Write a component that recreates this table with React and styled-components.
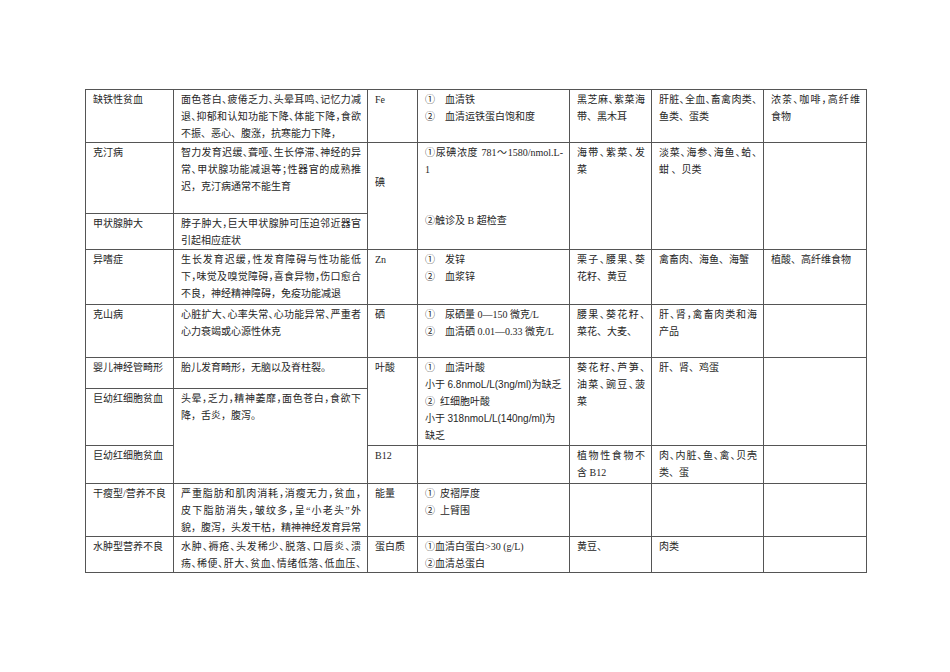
import React from "react";
import styled, { createGlobalStyle, css } from "styled-components";

const GlobalStyle = createGlobalStyle`
  body {
    margin: 0;
    background: #ffffff;
  }
`;

const Page = styled.div`
  padding: 89px 0 40px 85px;
`;

const Table = styled.table`
  border-collapse: collapse;
  table-layout: fixed;
  width: 781px;
  font-family: "Liberation Serif", "Noto Sans CJK SC", serif;
  font-size: 10px;
  color: #262626;
`;

const Row = styled.tr`
  height: ${(p) => p.$h}px;
`;

const Cell = styled.td`
  border: 1px solid #555;
  vertical-align: top;
  padding: ${(p) => p.$pt ?? 1}px 6px 0 7px;
  line-height: 17px;
  overflow: hidden;
`;

const Line = styled.div`
  height: 17px;
  white-space: nowrap;
  ${(p) =>
    p.$j &&
    css`
      text-align: justify;
      text-align-last: justify;
      font-feature-settings: "halt";
    `}
`;

const Sans = styled.span`
  font-family: "Liberation Sans", "Noto Sans CJK SC", sans-serif;
`;

// J() = 满行，两端对齐
const J = (t) => ({ t, j: true });

const widths = [88, 194, 50, 152, 82, 112, 103];

const rows = [
  {
    h: 53,
    cells: [
      { l: ["缺铁性贫血"] },
      {
        l: [
          J("面色苍白、疲倦乏力、头晕耳鸣、记忆力减"),
          J("退、抑郁和认知功能下降、体能下降，食欲"),
          "不振、恶心、腹涨，抗寒能力下降，",
        ],
      },
      { l: ["Fe"] },
      { l: ["①\u3000血清铁", "②\u3000血清运铁蛋白饱和度"] },
      { l: [J("黑芝麻、紫菜海"), "带、黑木耳"] },
      { l: [J("肝脏、全血、畜禽肉类、"), "鱼类、蛋类"] },
      { l: [J("浓茶、咖啡，高纤维"), "食物"] },
    ],
  },
  {
    h: 71,
    cells: [
      { l: ["克汀病"] },
      {
        l: [
          J("智力发育迟缓、聋哑、生长停滞、神经的异"),
          J("常、甲状腺功能减退等；性器官的成熟推"),
          "迟，克汀病通常不能生育",
        ],
      },
      { l: ["碘"], rs: 2, pt: 31 },
      { l: [J("①尿碘浓度 781～1580/nmol.L-"), "1", "", "", "②触诊及 B 超检查"], rs: 2 },
      { l: [J("海带、紫菜、发"), "菜"], rs: 2 },
      { l: [J("淡菜、海参、海鱼、蛤、"), "蚶 、贝类"], rs: 2 },
      { l: [], rs: 2 },
    ],
  },
  {
    h: 36,
    cells: [
      { l: ["甲状腺肿大"] },
      { l: [J("脖子肿大，巨大甲状腺肿可压迫邻近器官"), "引起相应症状"] },
    ],
  },
  {
    h: 55,
    cells: [
      { l: ["异嗜症"] },
      {
        l: [
          J("生长发育迟缓，性发育障碍与性功能低"),
          J("下，味觉及嗅觉障碍，喜食异物，伤口愈合"),
          "不良，神经精神障碍，免疫功能减退",
        ],
      },
      { l: ["Zn"] },
      { l: ["①\u3000发锌", "②\u3000血浆锌"] },
      { l: [J("栗子、腰果、葵"), "花籽、黄豆"] },
      { l: ["禽畜肉、海鱼、海蟹"] },
      { l: ["植酸、高纤维食物"] },
    ],
  },
  {
    h: 53,
    cells: [
      { l: ["克山病"] },
      { l: [J("心脏扩大、心率失常、心功能异常、严重者"), "心力衰竭或心源性休克"] },
      { l: ["硒"] },
      { l: ["①\u3000尿硒量 0—150 微克/L", "②\u3000血清硒 0.01—0.33 微克/L"] },
      { l: [J("腰果、葵花籽、"), "菜花、大麦、"] },
      { l: [J("肝、肾，禽畜肉类和海"), "产品"] },
      { l: [] },
    ],
  },
  {
    h: 31,
    cells: [
      { l: ["婴儿神经管畸形"] },
      { l: ["胎儿发育畸形，无脑以及脊柱裂。"] },
      { l: ["叶酸"], rs: 2 },
      {
        l: [
          "①\u3000血清叶酸",
          <>
            小于 <Sans>6.8nmoL/L(3ng/ml)</Sans>为缺乏
          </>,
          "②\u2002红细胞叶酸",
          <>
            小于 <Sans>318nmoL/L(140ng/ml)</Sans>为
          </>,
          "缺乏",
        ],
        rs: 2,
      },
      { l: [J("葵花籽、芦笋、"), J("油菜、豌豆、菠"), "菜"], rs: 2 },
      { l: ["肝、肾、鸡蛋"], rs: 2 },
      { l: [], rs: 2 },
    ],
  },
  {
    h: 57,
    cells: [
      { l: ["巨幼红细胞贫血"] },
      { l: [J("头晕，乏力，精神萎靡，面色苍白，食欲下"), "降，舌炎，腹泻。"], rs: 2 },
    ],
  },
  {
    h: 38,
    cells: [
      { l: ["巨幼红细胞贫血"] },
      { l: ["B12"] },
      { l: [] },
      { l: [J("植物性食物不"), "含 B12"] },
      { l: [J("肉、内脏、鱼、禽、贝壳"), "类、蛋"] },
      { l: [] },
    ],
  },
  {
    h: 53,
    cells: [
      { l: ["干瘦型/营养不良"] },
      {
        l: [
          J("严重脂肪和肌肉消耗，消瘦无力，贫血，"),
          J("皮下脂肪消失，皱纹多，呈“小老头”外"),
          "貌，腹泻，头发干枯，精神神经发育异常",
        ],
      },
      { l: ["能量"] },
      { l: ["①\u2002皮褶厚度", "②\u2002上臂围"] },
      { l: [] },
      { l: [] },
      { l: [] },
    ],
  },
  {
    h: 36,
    cells: [
      { l: ["水肿型营养不良"] },
      {
        l: [
          J("水肿、褥疮、头发稀少、脱落、口唇炎、溃"),
          J("疡、稀便、肝大、贫血、情绪低落、低血压、"),
        ],
      },
      { l: ["蛋白质"] },
      { l: ["①血清白蛋白>30 (g/L)", "②血清总蛋白"] },
      { l: ["黄豆、"] },
      { l: ["肉类"] },
      { l: [] },
    ],
  },
];

function CellLines({ lines }) {
  return lines.map((ln, i) => {
    if (ln && typeof ln === "object" && ln.j) {
      return (
        <Line key={i} $j>
          {ln.t}
        </Line>
      );
    }
    return <Line key={i}>{ln === "" ? "\u00a0" : ln}</Line>;
  });
}

export default function App() {
  return (
    <>
      <GlobalStyle />
      <Page>
        <Table>
          <colgroup>
            {widths.map((w, i) => (
              <col key={i} style={{ width: w }} />
            ))}
          </colgroup>
          <tbody>
            {rows.map((r, ri) => (
              <Row key={ri} $h={r.h}>
                {r.cells.map((c, ci) => (
                  <Cell key={ci} rowSpan={c.rs} $pt={c.pt}>
                    <CellLines lines={c.l} />
                  </Cell>
                ))}
              </Row>
            ))}
          </tbody>
        </Table>
      </Page>
    </>
  );
}
